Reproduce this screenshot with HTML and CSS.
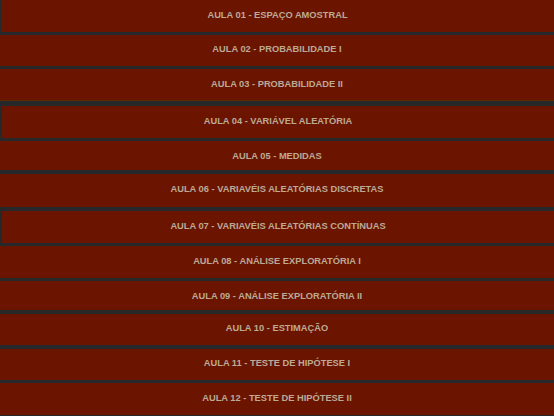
FILE: index.html
```html
<!DOCTYPE html>
<html lang="pt">
<head>
<meta charset="utf-8">
<title>Aulas</title>
<link rel="stylesheet" href="styles.css">
</head>
<body>
<div class="list">
  <div class="item h32 edge1 g3">AULA 01 - ESPAÇO AMOSTRAL</div>
  <div class="item h31 g3">AULA 02 - PROBABILIDADE I</div>
  <div class="item h32 olive g5">AULA 03 - PROBABILIDADE II</div>
  <div class="item h32 edge g3">AULA 04 - VARIÁVEL ALEATÓRIA</div>
  <div class="item h29 g4">AULA 05 - MEDIDAS</div>
  <div class="item h33 g4">AULA 06 - VARIAVÉIS ALEATÓRIAS DISCRETAS</div>
  <div class="item h32 edge g3">AULA 07 - VARIAVÉIS ALEATÓRIAS CONTÍNUAS</div>
  <div class="item h32 g3">AULA 08 - ANÁLISE EXPLORATÓRIA I</div>
  <div class="item h29 g4">AULA 09 - ANÁLISE EXPLORATÓRIA II</div>
  <div class="item h31 g4">AULA 10 - ESTIMAÇÃO</div>
  <div class="item h31 g3">AULA 11 - TESTE DE HIPÓTESE I</div>
  <div class="item h32">AULA 12 - TESTE DE HIPÓTESE II</div>
</div>
</body>
</html>
```

FILE: styles.css
```css
html, body {
  margin: 0;
  padding: 0;
  background: #262829;
  height: 416px;
  overflow: hidden;
}

.list {
  display: flex;
  flex-direction: column;
}

.item {
  box-sizing: content-box;
  display: flex;
  align-items: center;
  justify-content: center;
  padding-bottom: 1px;
  background: #6b1400;
  color: #bcaa96;
  font-family: "Liberation Sans", Arial, sans-serif;
  font-weight: bold;
  font-size: 9.3px;
  line-height: 1;
  white-space: nowrap;
}

.h29 { height: 27px; padding-top: 2px; padding-bottom: 0; }
.h31 { height: 30px; }
.h32 { height: 31px; }
.h33 { height: 32px; }

.g3 { margin-bottom: 3px; }
.g4 { margin-bottom: 4px; }
.g5 { margin-bottom: 5px; }

.edge { border-left: 2px solid #262829; }
.edge1 { border-left: 1px solid #262829; }

.olive { border-bottom: 1px solid #5a2c00; padding-bottom: 0; }
```
